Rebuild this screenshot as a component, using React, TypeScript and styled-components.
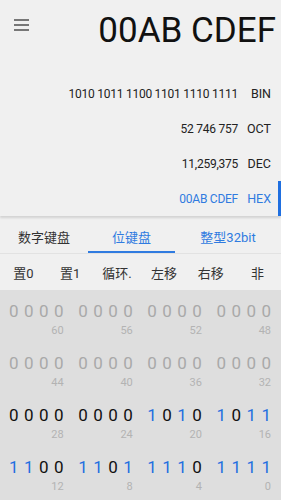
import React from "react";
import styled, { createGlobalStyle } from "styled-components";

const GlobalStyle = createGlobalStyle`
  html, body {
    margin: 0;
    padding: 0;
    background: #f0f0f0;
  }
  body {
    font-family: Roboto, "Noto Sans CJK SC", sans-serif;
    width: 281px;
    height: 500px;
    overflow: hidden;
  }
`;

const BLUE = "#2f7be0";

const conversions = [
  { value: "1010 1011 1100 1101 1110 1111", label: "BIN" },
  { value: "52 746 757", label: "OCT" },
  { value: "11,259,375", label: "DEC" },
  { value: "00AB CDEF", label: "HEX", active: true },
];

const tabs = [
  { text: "数字键盘", width: 88 },
  { text: "位键盘", width: 87, active: true },
  { text: "整型32bit", width: 106, blue: true },
];

const ops = ["置0", "置1", "循环.", "左移", "右移", "非"];

const value = 0x00abcdef;

const App: React.FC = () => {
  const rows = [0, 1, 2, 3].map((r) =>
    [0, 1, 2, 3].map((g) => {
      const start = 63 - (r * 16 + g * 4);
      return {
        label: start - 3,
        bits: [0, 1, 2, 3].map((i) => {
          const pos = start - i;
          return pos < 32 ? (value >>> pos) & 1 : -1;
        }),
      };
    })
  );

  return (
    <>
      <GlobalStyle />
      <Page>
        <Header>
          <Menu aria-label="menu">
            <span />
            <span />
            <span />
          </Menu>
          <Title>00AB CDEF</Title>
        </Header>
        <Conversions>
          {conversions.map((c) => (
            <ConvRow key={c.label} $active={!!c.active}>
              <ConvValue>{c.value}</ConvValue>
              <ConvLabel>{c.label}</ConvLabel>
            </ConvRow>
          ))}
        </Conversions>
        <Tabs>
          {tabs.map((t) => (
            <Tab key={t.text} $width={t.width} $active={!!t.active} $blue={!!(t.active || t.blue)}>
              {t.text}
            </Tab>
          ))}
        </Tabs>
        <Ops>
          {ops.map((o) => (
            <Op key={o}>{o}</Op>
          ))}
        </Ops>
        <BitPad>
          {rows.map((row, ri) => (
            <BitRow key={ri}>
              {row.map((grp) => (
                <Group key={grp.label}>
                  <Digits>
                    {grp.bits.map((b, i) => (
                      <Digit key={i} $state={b}>
                        {b === 1 ? "1" : "0"}
                      </Digit>
                    ))}
                  </Digits>
                  <BitLabel>{grp.label}</BitLabel>
                </Group>
              ))}
            </BitRow>
          ))}
        </BitPad>
      </Page>
    </>
  );
};

const Page = styled.div`
  display: flex;
  flex-direction: column;
  width: 281px;
  height: 500px;
  background: #f0f0f0;
`;

const Header = styled.div`
  display: flex;
  align-items: center;
  justify-content: space-between;
  height: 62px;
  padding: 0 5px 0 14px;
`;

const Menu = styled.div`
  display: flex;
  flex-direction: column;
  gap: 3px;
  width: 15px;
  margin-top: -13px;

  span {
    display: block;
    height: 2px;
    background: #777;
  }
`;

const Title = styled.div`
  font-size: 35px;
  color: #111;
  line-height: 1;
  margin-top: -1px;
`;

const Conversions = styled.div`
  display: flex;
  flex-direction: column;
  padding-top: 14px;
  box-shadow: 0 2px 2px rgba(0, 0, 0, 0.12);
  position: relative;
  z-index: 1;
`;

const ConvRow = styled.div<{ $active: boolean }>`
  display: flex;
  justify-content: flex-end;
  align-items: center;
  height: 35px;
  padding-right: 7px;
  font-size: 12px;
  letter-spacing: -0.25px;
  color: ${(p) => (p.$active ? BLUE : "#222")};
  border-right: 3px solid ${(p) => (p.$active ? "#1f6fe0" : "transparent")};
`;

const ConvValue = styled.span``;

const ConvLabel = styled.span`
  width: 33px;
  text-align: right;
  font-size: 12.5px;
  letter-spacing: 0;
`;

const Tabs = styled.div`
  display: flex;
  height: 34px;
  border-bottom: 1px solid #e2e2e2;
  margin-top: 3px;
`;

const Tab = styled.div<{ $width: number; $active: boolean; $blue: boolean }>`
  width: ${(p) => p.$width}px;
  display: flex;
  align-items: center;
  justify-content: center;
  font-size: 13px;
  color: ${(p) => (p.$blue ? BLUE : "#333")};
  border-bottom: 2px solid ${(p) => (p.$active ? BLUE : "transparent")};
  box-sizing: border-box;
  padding-top: 2px;
`;

const Ops = styled.div`
  display: grid;
  grid-template-columns: repeat(6, 1fr);
  height: 36px;
  align-items: center;
`;

const Op = styled.div`
  text-align: center;
  font-size: 13px;
  color: #333;
`;

const BitPad = styled.div`
  flex: 1;
  background: #dedede;
  display: flex;
  flex-direction: column;
  gap: 14px;
  padding: 10px 10px 0 9px;
`;

const BitRow = styled.div`
  display: grid;
  grid-template-columns: repeat(4, 1fr);
  column-gap: 14.5px;
`;

const Group = styled.div`
  display: flex;
  flex-direction: column;
`;

const Digits = styled.div`
  display: flex;
  justify-content: space-between;
  height: 22px;
  line-height: 22px;
  font-size: 17px;
`;

const Digit = styled.span<{ $state: number }>`
  color: ${(p) => (p.$state === -1 ? "#a9a9a9" : p.$state === 1 ? "#1f6fe0" : "#111")};
`;

const BitLabel = styled.div`
  margin-top: 2px;
  height: 14px;
  line-height: 14px;
  font-size: 11px;
  color: #b3b3b3;
  text-align: right;
`;

export default App;
